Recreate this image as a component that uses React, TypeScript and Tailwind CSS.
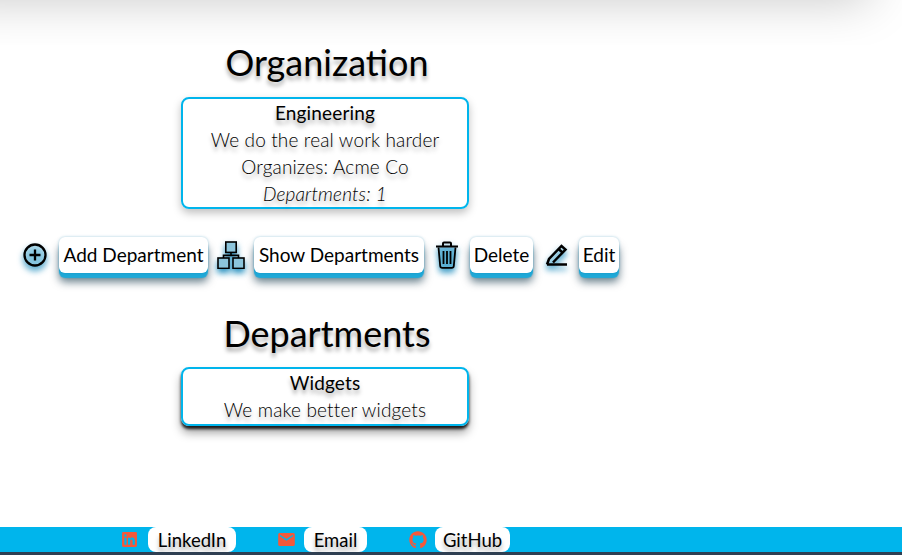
import React from "react";
import { FaGithub, FaLinkedin } from "react-icons/fa";
import { IoMdMail } from "react-icons/io";

const glow = "[filter:drop-shadow(0_4px_3px_rgba(0,125,180,0.85))]";
const textGlow = "[text-shadow:0_4px_4px_rgba(0,0,0,0.35)]";

function PlusIcon() {
  return (
    <svg width="24" height="24" viewBox="0 0 24 24" fill="none" stroke="#000" strokeWidth="2.300" className={glow}>
      <circle cx="12" cy="12" r="10.500" fill="#9fd4e8" fillOpacity="0.6" />
      <path d="M12 6.500v11M6.500 12h11" />
    </svg>
  );
}

function TreeIcon() {
  return (
    <svg width="28" height="28" viewBox="0 0 28 28" fill="#8cc5dc" stroke="#000" strokeWidth="1.600" className={glow}>
      <rect x="8.800" y="1" width="10.400" height="10.400" />
      <rect x="1" y="17" width="11" height="10.400" />
      <rect x="16" y="17" width="11" height="10.400" />
      <path d="M14 11.400v3M6.500 17v-2.600h15V17" fill="none" />
    </svg>
  );
}

function TrashIcon() {
  return (
    <svg width="24" height="28" viewBox="0 0 24 28" fill="none" stroke="#000" strokeWidth="1.800" className={glow}>
      <path d="M3.500 6.500 5.200 25a2 2 0 0 0 2 1.800h9.600a2 2 0 0 0 2-1.800l1.700-18.500" fill="#5fb2d4" fillOpacity="0.8" />
      <path d="M1 5.500h22M8 5.500V2.500a1 1 0 0 1 1-1h6a1 1 0 0 1 1 1v3" strokeWidth="2" />
      <path d="M8.500 10v13M12 10v13M15.500 10v13" />
    </svg>
  );
}

function PencilIcon() {
  return (
    <svg width="24" height="24" viewBox="0 0 24 24" fill="none" stroke="#000" strokeWidth="2.500" className={glow}>
      <path d="M2 21.500 4 16 16.500 3l4 3.500L8 19.500" fill="#9fd4e8" fillOpacity="0.4" />
      <path d="M13.500 6l4 3.500M2 21.500h20" />
    </svg>
  );
}

function ActionButton({ label, className }: { label: string; className: string }) {
  return (
    <button
      className={`h-9 rounded-md bg-white text-[19px] text-black text-center [box-shadow:0_0_3px_rgba(0,120,170,0.35),0_5px_1px_#1fa9d8,0_9px_9px_rgba(0,40,60,0.6)] ${className}`}
    >
      {label}
    </button>
  );
}

function Card({ children, className }: { children: React.ReactNode; className: string }) {
  return (
    <div
      className={`w-[288px] rounded-lg border-2 border-[#00b5ec] flex flex-col items-center text-[19px] tracking-[0.15px] leading-[27px] ${textGlow} ${className}`}
    >
      {children}
    </div>
  );
}

function FooterLink({
  icon,
  label,
  iconClass,
  className,
}: {
  icon: React.ReactNode;
  label: string;
  iconClass: string;
  className: string;
}) {
  return (
    <div className="flex items-center">
      <span className={`text-[#f4593b] flex ${iconClass}`}>{icon}</span>
      <span className={`h-[25px] rounded-lg bg-white text-[18.500px] leading-[27px] text-center ${textGlow} ${className}`}>
        {label}
      </span>
    </div>
  );
}

export default function App() {
  return (
    <div className="h-[555px] w-[902px] flex flex-col overflow-hidden bg-white text-black font-['Lato','Liberation_Sans',sans-serif]">
      <div className="h-[45px] shrink-0 overflow-hidden">
        <div className="-mt-[60px] -ml-[50px] h-[60px] w-[920px] [box-shadow:0_0_50px_rgba(0,0,0,0.22)]" />
      </div>
      <main className="flex-1 w-[650px]">
        <h1 className={`-mt-[2px] pl-1 text-[36px] leading-[38px] text-center ${textGlow}`}>Organization</h1>
        <Card className="mt-4 mx-auto h-[112px] [box-shadow:0_4px_8px_rgba(0,0,0,0.25)]">
          <span className="font-normal">Engineering</span>
          <span className="font-light">We do the real work harder</span>
          <span className="font-light">Organizes: Acme Co</span>
          <em className="font-light">Departments: 1</em>
        </Card>
        <div className="mt-7 flex items-center pl-[23px]">
          <PlusIcon />
          <ActionButton label="Add Department" className="w-[149px] ml-3" />
          <span className="ml-[9px] flex"><TreeIcon /></span>
          <ActionButton label="Show Departments" className="w-[170px] ml-[9px]" />
          <span className="ml-[11px] flex"><TrashIcon /></span>
          <ActionButton label="Delete" className="w-[63px] ml-[11px]" />
          <span className="ml-3 flex"><PencilIcon /></span>
          <ActionButton label="Edit" className="w-[40px] ml-[10px]" />
        </div>
        <h2 className={`mt-[41px] pl-1 text-[36px] leading-[38px] text-center ${textGlow}`}>Departments</h2>
        <Card className="mt-[15px] mx-auto h-[59px] [box-shadow:0_3px_3px_rgba(0,0,0,0.85),0_7px_10px_rgba(0,0,0,0.35)]">
          <span className="font-normal">Widgets</span>
          <span className="font-light">We make better widgets</span>
        </Card>
      </main>
      <footer className="h-[25px] shrink-0 bg-[#00b5ec] flex items-center gap-[42px] pl-[121px]">
        <FooterLink icon={<FaLinkedin size={17} />} iconClass="w-[27px]" label="LinkedIn" className="w-[88px]" />
        <FooterLink icon={<IoMdMail size={19} />} iconClass="w-[26px] -ml-px" label="Email" className="ml-px w-[63px]" />
        <FooterLink icon={<FaGithub size={18} />} iconClass="w-[26px]" label="GitHub" className="w-[75px]" />
      </footer>
      <div className="h-[3px] shrink-0 bg-[#2f3f52]" />
    </div>
  );
}
